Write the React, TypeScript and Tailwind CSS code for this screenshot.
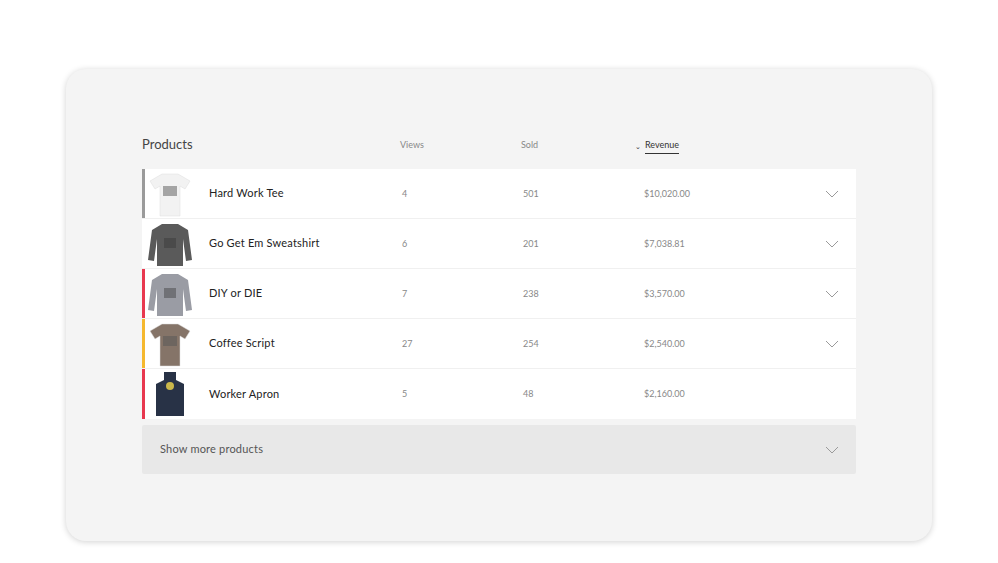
import React from "react";

const rows = [
  { name: "Hard Work Tee", views: "4", sold: "501", rev: "$10,020.00", bar: "bg-[#9a9a9a]", color: "#f2f2f2", kind: "tee", chev: true },
  { name: "Go Get Em Sweatshirt", views: "6", sold: "201", rev: "$7,038.81", bar: "bg-white", color: "#5a5a5a", kind: "sweat", chev: true },
  { name: "DIY or DIE", views: "7", sold: "238", rev: "$3,570.00", bar: "bg-[#e8384f]", color: "#9a9ca4", kind: "sweat", chev: true },
  { name: "Coffee Script", views: "27", sold: "254", rev: "$2,540.00", bar: "bg-[#f5b82e]", color: "#857468", kind: "tee", chev: true },
  { name: "Worker Apron", views: "5", sold: "48", rev: "$2,160.00", bar: "bg-[#e8384f]", color: "#283246", kind: "apron", chev: false },
];

function Chevron() {
  return (
    <svg width="14" height="8" viewBox="0 0 14 8" fill="none" stroke="#9a9a9a" strokeWidth="1">
      <path d="M1 1l6 6 6-6" />
    </svg>
  );
}

function Thumb({ color, kind }: { color: string; kind: string }) {
  if (kind === "apron")
    return (
      <svg width="44" height="48" viewBox="0 0 44 48">
        <path d="M16 2h12v8l8 4v32H8V14l8-4z" fill={color} />
        <circle cx="22" cy="16" r="4" fill="#c9b64a" />
      </svg>
    );
  if (kind === "sweat")
    return (
      <svg width="44" height="48" viewBox="0 0 44 48">
        <path d="M14 4h16l10 6 4 30-6 1-3-22v27H9V19L6 41l-6-1 4-30z" fill={color} />
        <path d="M16 18h12v10H16z" fill="#333" opacity="0.4" />
      </svg>
    );
  return (
    <svg width="44" height="48" viewBox="0 0 44 48">
      <path d="M14 4h16l12 7-5 8-5-3v30H12V16l-5 3-5-8z" fill={color} stroke="#ddd" strokeWidth="0.5" />
      <path d="M15 16h14v10H15z" fill="#555" opacity="0.5" />
    </svg>
  );
}

export default function App() {
  return (
    <div className="w-[998px] h-[563px] bg-white pt-[69px] pl-[66px]" style={{ fontFamily: "Lato, 'Noto Sans', sans-serif" }}>
      <div className="w-[866px] h-[472px] bg-[#f4f4f4] rounded-[20px] shadow-[0_1px_6px_rgba(0,0,0,0.18)] pt-[67px] pl-[76px]">
        <div className="w-[714px]">
          <div className="flex items-start h-[33px] pt-[2px] text-[9px] text-[#888]">
            <div className="w-[258px] text-[13px] text-[#444] -mt-[3px]">Products</div>
            <div className="w-[121px]">Views</div>
            <div className="w-[114px]">Sold</div>
            <div className="flex items-center gap-1 text-[#333]">
              <span className="text-[7px]">⌄</span>
              <span className="border-b border-[#333] pb-[1px]">Revenue</span>
            </div>
          </div>
          <div className="bg-white">
            {rows.map((r, i) => (
              <div key={i} className={`flex items-center h-[50px] ${i < 4 ? "border-b border-[#f0f0f0]" : ""}`}>
                <div className={`w-[3px] h-full ${r.bar}`} />
                <div className="w-[64px] pl-[3px] flex items-center">
                  <Thumb color={r.color} kind={r.kind} />
                </div>
                <div className="w-[193px] text-[11px] text-[#222] tracking-[0.2px]">{r.name}</div>
                <div className="w-[121px] text-[9px] text-[#888]">{r.views}</div>
                <div className="w-[121px] text-[9px] text-[#888]">{r.sold}</div>
                <div className="flex-1 text-[9px] text-[#888]">{r.rev}</div>
                <div className="w-[31px]">{r.chev && <Chevron />}</div>
              </div>
            ))}
          </div>
          <div className="mt-[6px] h-[49px] bg-[#e8e8e8] rounded-[2px] flex items-center justify-between pl-[18px] pr-[17px]">
            <span className="text-[11px] text-[#555] tracking-[0.2px]">Show more products</span>
            <Chevron />
          </div>
        </div>
      </div>
    </div>
  );
}
